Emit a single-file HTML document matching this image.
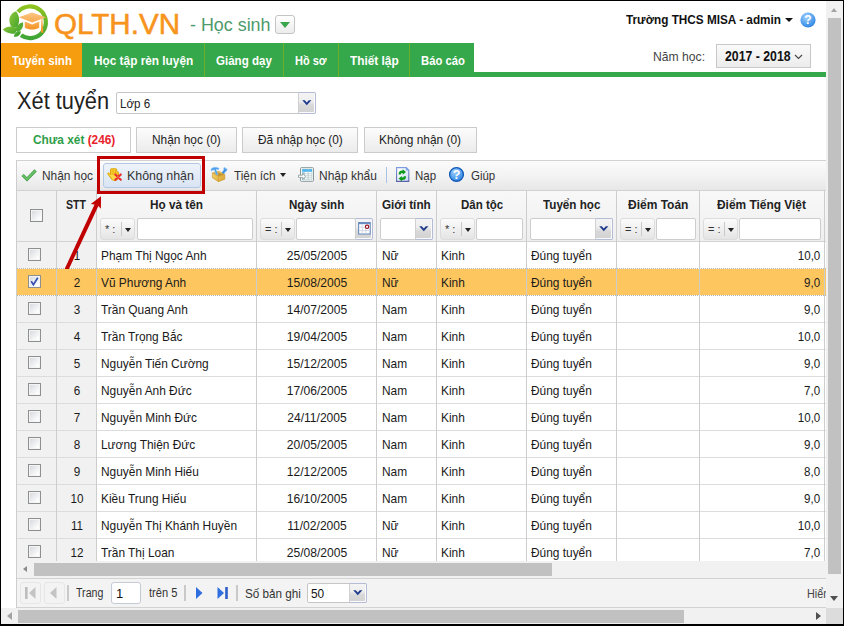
<!DOCTYPE html>
<html lang="vi">
<head>
<meta charset="utf-8">
<title>QLTH.VN - Xét tuyển</title>
<style>
html,body{margin:0;padding:0;}
body{width:844px;height:626px;overflow:hidden;background:#fff;font-family:"Liberation Sans",sans-serif;font-size:13px;color:#1a1a1a;position:relative;}
#page{position:absolute;left:0;top:0;width:844px;height:626px;background:#fff;overflow:hidden;}
.a{position:absolute;}
.t{position:absolute;white-space:nowrap;line-height:16px;height:16px;transform-origin:0 0;}
svg{position:absolute;overflow:visible;}
/* nav */
.nav{position:absolute;top:43px;height:34px;background:#35a84b;}
.nav i{position:absolute;left:0;top:0;width:1px;height:34px;background:#6fae2a;}
.nv{color:#fff;font-weight:bold;font-size:13px;top:53px;}
#navline{position:absolute;left:82px;top:72px;width:744px;height:5px;background:#35a84b;}
/* tabs */
.tab{position:absolute;top:127px;height:26px;box-sizing:border-box;border:1px solid #cbcbcb;background:linear-gradient(#fcfcfc,#ebebeb);}
.tb{top:132px;font-size:13px;color:#222;}
/* grid */
#gtb{position:absolute;left:16px;top:160px;width:810px;height:31px;box-sizing:border-box;border:1px solid #d2d2d2;border-right:0;background:linear-gradient(#fbfbfb 0%,#f3f3f3 50%,#e7e7e7 100%);}
#ghd{position:absolute;left:16px;top:191px;width:810px;height:51px;box-sizing:border-box;border:1px solid #d2d2d2;border-top:0;border-right:0;background:linear-gradient(#f8f8f8,#efefef);}
.vl{position:absolute;width:1px;background:#cdcdcd;top:191px;height:370px;z-index:3;}
.tt{top:167px;font-size:13px;color:#333;}
.th{top:197px;font-weight:bold;font-size:13px;color:#222;}
.row{position:absolute;left:17px;width:809px;height:26px;border-bottom:1px solid #dcdcdc;}
.row:before{content:"";position:absolute;left:0;top:0;width:79px;height:26px;background:#f1f1f1;}
.row.sel{background:#fec65f;border-bottom:1px solid transparent;background-clip:padding-box;}
.row.sel:before{background:repeating-linear-gradient(90deg,#b4b4b4 0 1px,#fbfbfb 1px 2px);left:0;top:26px;width:809px;height:1px;}
.row.sel:after{content:"";position:absolute;left:0;top:-1px;width:809px;height:1px;background:repeating-linear-gradient(90deg,#b4b4b4 0 1px,#fbfbfb 1px 2px);}
.c{position:absolute;top:6px;transform:scaleX(.915);transform-origin:0 0;font-size:13px;white-space:nowrap;line-height:16px;color:#1a1a1a;}
.cb{position:absolute;left:11px;top:6px;width:11px;height:11px;border:1px solid #8e8f8f;background:linear-gradient(135deg,#d9dbe0 10%,#fdfdfd 80%);box-shadow:inset 0 0 0 1px #f4f4f4;}
.cb svg{left:0;top:0;}
.stt{left:40px;width:40px;text-align:center;transform-origin:50% 0;transform:scaleX(.9);}
.nm{left:84px;}
.dob{left:240px;width:120px;text-align:center;transform-origin:50% 0;transform:scaleX(.93);}
.sex{left:365px;}
.dt{left:424px;}
.th2{left:514px;}
.sc{right:6px;transform-origin:100% 0;transform:scaleX(.89);}
.fbtn{position:absolute;top:218px;height:22px;box-sizing:border-box;border:1px solid #dcdcdc;border-radius:3px;background:linear-gradient(#fbfbfb,#e4e4e4);}
.fbtn b{position:absolute;left:4px;top:3px;font-weight:normal;font-size:11px;line-height:14px;color:#333;white-space:nowrap;}
.fbtn i{position:absolute;right:12px;top:3px;width:1px;height:14px;background:#c9c9c9;}
.fbtn u{position:absolute;right:3px;top:9px;width:0;height:0;border:3px solid transparent;border-top:4px solid #222;border-bottom:0;}
.fin{position:absolute;top:218px;height:22px;box-sizing:border-box;border:1px solid #cdcdcd;border-radius:2px;background:#fff;}
.dd{position:absolute;right:-1px;top:-1px;width:18px;height:22px;box-sizing:border-box;border:1px solid #b4bcd6;border-left-color:#d0d0d0;border-radius:0 2px 2px 0;background:linear-gradient(#f4f4f4 0%,#eeeeee 40%,#d9d9d9 60%,#d2d2d2 100%);box-shadow:inset -1px -1px 0 #fbfbfb;}
.dd svg{left:3px;top:7px;}
/* pager */
#pg{position:absolute;left:16px;top:578px;width:810px;height:30px;box-sizing:border-box;border:1px solid #d2d2d2;border-right:0;background:#f3f3f3;}
.pt{font-size:12px;color:#333;top:586px;}
.sep{position:absolute;width:2px;height:16px;top:585px;background:#c9c9c9;margin-left:-1px;}
/* scrollbars */
.sbt{background:#f1f1f1;position:absolute;}
.sbh{background:#c1c1c1;position:absolute;}

</style>
</head>
<body>
<div id="page">

<!-- ===== header ===== -->
<svg id="logo" style="left:0;top:0" width="56" height="42" viewBox="0 0 56 42">
  <defs>
    <linearGradient id="lg1" x1="0" y1="0" x2="0" y2="1"><stop offset="0" stop-color="#8fc31f"/><stop offset="1" stop-color="#3ea535"/></linearGradient>
    <linearGradient id="lg2" x1="0" y1="0" x2="0" y2="1"><stop offset="0" stop-color="#fcc684"/><stop offset="1" stop-color="#f8a94e"/></linearGradient>
    <linearGradient id="lg3" x1="0" y1="0" x2="0" y2="1"><stop offset="0" stop-color="#f9b35e"/><stop offset="1" stop-color="#f3921f"/></linearGradient>
    <linearGradient id="lg4" x1="0" y1="0" x2="1" y2="1"><stop offset="0" stop-color="#8fc73a"/><stop offset="1" stop-color="#44a52c"/></linearGradient>
  </defs>
  <path d="M17.6 11.2 A15.85 15.85 0 1 1 20.6 34.6" fill="none" stroke="url(#lg1)" stroke-width="4.2" transform="translate(0.4,0.7)"/>
  <path d="M16.1 11.2 C10 13.5 7.6 19.4 10.8 26 C12.6 27.8 15.4 28 17.2 27 C20 21.6 19.8 16.4 16.1 11.2 Z" fill="url(#lg4)"/>
  <path d="M2.8 29.6 C6.4 25.8 12 25.6 16.4 27.8 C17 29.8 16.4 32 15 33.4 C10.6 34.2 5.8 33.2 2.8 29.6 Z" fill="url(#lg4)"/>
  <path d="M15.6 30.6 C15.8 26.4 18.8 23 23 22.2 C23.8 26.6 21.8 30.6 17.4 32 Z" fill="#58ad34"/>
  <path d="M13.8 36.8 C14.4 33 17 30.8 20.8 31.2 C20.8 34.8 18 37.2 13.8 36.8 Z" fill="#45a52d"/>
  <path d="M18.8 17.3 L31.9 12.4 L45.9 17.3 L32.2 22.6 Z" fill="url(#lg2)"/>
  <path d="M24.8 21.6 L32.2 24.4 L39.2 21.6 L39.2 27.4 C35.4 30.2 29 30.2 24.8 27.4 Z" fill="url(#lg3)"/>
  <path d="M41.4 18.8 L42.4 18.6 L43.4 33 L40.9 32.2 Z" fill="url(#lg3)"/>
</svg>
<span class="t" id="brand" style="left:54px;top:8px;font-size:29px;line-height:32px;height:32px;color:#f7941d;-webkit-text-stroke:0.55px #f7941d;transform:scaleX(1.02)">QLTH.VN</span>
<span class="t" id="role" style="left:190px;top:14px;font-size:18px;line-height:22px;height:22px;color:#4d9a6c;transform:scaleX(0.9936)">- Học sinh</span>
<div class="a" style="left:275px;top:15px;width:20px;height:19px;box-sizing:border-box;border:1px solid #c4c4c4;border-radius:3px;background:linear-gradient(#fff,#ececec);"><span class="a" style="left:4px;top:6px;width:0;height:0;border:5px solid transparent;border-top:6px solid #3aa64c;border-bottom:0;"></span></div>

<span class="t" id="school" style="left:625.5px;top:12px;font-size:13px;font-weight:bold;color:#111;transform:scaleX(0.905)">Trường THCS MISA - admin</span>
<span class="a" style="left:785px;top:18px;width:0;height:0;border:4px solid transparent;border-top:4px solid #111;border-bottom:0;"></span>
<svg style="left:800px;top:12px" width="16" height="16" viewBox="0 0 16 16">
  <defs><radialGradient id="hg" cx="0.4" cy="0.3" r="0.8"><stop offset="0" stop-color="#a4d2fd"/><stop offset="0.65" stop-color="#4a9aec"/><stop offset="1" stop-color="#2b7ad8"/></radialGradient></defs>
  <circle cx="8" cy="8" r="7.6" fill="url(#hg)"/>
  <text x="8" y="12.2" text-anchor="middle" font-family="Liberation Sans,sans-serif" font-weight="bold" font-size="12" fill="#fff">?</text>
</svg>
<span class="t" id="namhoc" style="left:653.1px;top:49px;font-size:13px;color:#444;transform:scaleX(0.9349)">Năm học:</span>
<div class="a" style="left:716px;top:44px;width:95px;height:24px;box-sizing:border-box;border:1px solid #c8c8c8;background:linear-gradient(#fafafa,#ececec);"></div>
<span class="t" id="year" style="left:725.2px;top:48px;font-size:14px;font-weight:bold;color:#111;transform:scaleX(0.8773)">2017 - 2018</span>
<svg style="left:794px;top:54px" width="9" height="6" viewBox="0 0 9 6"><path d="M1 1 L4.5 4.5 L8 1" fill="none" stroke="#444" stroke-width="1.1"/></svg>

<!-- ===== nav ===== -->
<div id="navline"></div>
<div class="nav" style="left:1px;width:81px;background:#f59c0f;"></div>
<div class="nav" style="left:82px;width:122px;"></div>
<div class="nav" style="left:204px;width:79px;"><i></i></div>
<div class="nav" style="left:283px;width:55px;"><i></i></div>
<div class="nav" style="left:338px;width:71px;"><i></i></div>
<div class="nav" style="left:409px;width:65px;"><i></i></div>
<span class="t nv" id="n1" style="left:12px;top:53px;transform:scaleX(0.8861)">Tuyển sinh</span>
<span class="t nv" id="n2" style="left:93.8px;top:53px;transform:scaleX(0.9094)">Học tập rèn luyện</span>
<span class="t nv" id="n3" style="left:215.5px;top:53px;transform:scaleX(0.8881)">Giảng dạy</span>
<span class="t nv" id="n4" style="left:294.5px;top:53px;transform:scaleX(0.8449)">Hồ sơ</span>
<span class="t nv" id="n5" style="left:349.5px;top:53px;transform:scaleX(0.9111)">Thiết lập</span>
<span class="t nv" id="n6" style="left:420.5px;top:53px;transform:scaleX(0.869)">Báo cáo</span>

<!-- ===== title ===== -->
<span class="t" id="title" style="left:16.5px;top:88px;font-size:23.5px;line-height:26px;height:26px;color:#222;transform:scaleX(0.9265)">Xét tuyển</span>
<div class="a" style="left:116px;top:92px;width:200px;height:22px;box-sizing:border-box;border:1px solid #c6c6c6;border-radius:2px;background:#fff;">
  <div class="dd"><svg width="10" height="6" viewBox="0 0 10 6"><path d="M0.2 0.2 L2.8 0.2 L4.8 2.5 L6.8 0.2 L9.4 0.2 L4.8 5.3 Z" fill="#1f3a8c"/></svg></div>
</div>
<span class="t" id="lop" style="left:120px;top:96px;font-size:12px;color:#222;transform:scaleX(0.9667)">Lớp 6</span>

<!-- ===== tabs ===== -->
<div class="tab" style="left:16px;width:115px;background:#fff;"></div>
<div class="tab" style="left:136px;width:101px;"></div>
<div class="tab" style="left:242px;width:116px;"></div>
<div class="tab" style="left:364px;width:113px;"></div>
<span class="t tb" id="t1" style="left:32.5px;top:132px;font-weight:bold;color:#2e9e48;transform:scaleX(0.9111)">Chưa xét <span style="color:#e8222b">(246)</span></span>
<span class="t tb" id="t2" style="left:152.3px;top:132px;transform:scaleX(0.9144)">Nhận học (0)</span>
<span class="t tb" id="t3" style="left:258px;top:132px;transform:scaleX(0.9097)">Đã nhập học (0)</span>
<span class="t tb" id="t4" style="left:379.1px;top:132px;transform:scaleX(0.9146)">Không nhận (0)</span>

<!-- ===== grid toolbar ===== -->
<div id="gtb"></div>
<div id="ghd"></div>
<div class="a" style="left:17px;top:191px;width:79px;height:50px;background:#f1f1f1;"></div>
<div class="a" style="left:103px;top:163px;width:98px;height:25px;box-sizing:border-box;border:1px solid #b3c8e4;border-radius:3px;background:linear-gradient(#eef3fa,#d9e4f3);"></div>
<svg style="left:21px;top:168px" width="16" height="14" viewBox="0 0 16 14"><path d="M1.6 7 L6 11.4 L14.6 2.4" fill="none" stroke="#3f9a3f" stroke-width="3.1" stroke-linejoin="miter"/><path d="M1.8 7 L6 11.2 L14.4 2.5" fill="none" stroke="#6cc36c" stroke-width="1.7" stroke-linejoin="miter"/></svg>
<span class="t tt" id="b1" style="left:41.6px;top:168px;transform:scaleX(0.9157)">Nhận học</span>
<svg style="left:106px;top:167px" width="17" height="15" viewBox="0 0 17 15">
<g transform="translate(1.1,0.9) scale(0.89)">
  <path d="M3.9 1.8 Q3.9 1 4.7 1 L9.9 1 Q10.8 1 10.8 2 L10.8 4.4 L12.2 4.4 Q12.9 4.4 12.9 5.2 L12.9 10 Q12.9 14 9.4 14 L7.2 14 Q6 14 5.2 12.8 L1.1 7.2 Q0.5 6.2 1.3 5.7 Q2.1 5.3 2.8 6.1 L3.9 7.4 Z" fill="#ffd84a" stroke="#d9a300" stroke-width="1.1"/>
  <path d="M5.7 1.6 V8.2 M7.5 1.6 V8.2 M9.3 1.6 V8.2 M11.3 5 V8.6" stroke="#e0a800" stroke-width="0.9" fill="none"/>
  <path d="M2 7 L5.8 12.2" stroke="#e8b418" stroke-width="0.8" stroke-dasharray="1 1" fill="none"/>
  <path d="M9.2 7.4 L15.4 13.4 M15.4 7.4 L9.2 13.4" stroke="#e8312c" stroke-width="2.4" stroke-linecap="round" fill="none"/>
  <circle cx="12.3" cy="10.4" r="1.6" fill="#f2504a"/>
</g>
</svg>
<span class="t tt" id="b2" style="left:127px;top:168px;transform:scaleX(0.9544)">Không nhận</span>
<svg style="left:210px;top:166px" width="18" height="17" viewBox="0 0 18 17">
  <defs><linearGradient id="tbx" x1="0" y1="0" x2="1" y2="1"><stop offset="0" stop-color="#f6d873"/><stop offset="1" stop-color="#d9a02c"/></linearGradient></defs>
  <path d="M11.2 7.4 L14 3.6 L13.6 2 L15 1.4 L15.6 3 L16.8 2.6 L17 4.4 L15.6 5.6 L13.4 8.8 Z" fill="#3f92e4" stroke="#8cc4f4" stroke-width="0.5"/>
  <path d="M2.4 6.9 L8.4 5.2 L14.8 8.7 L14.8 13.2 L8.4 15.7 L2.4 11.7 Z" fill="url(#tbx)" stroke="#c9962a" stroke-width="0.6"/>
  <path d="M3.4 7.2 L8.4 5.9 L13.6 8.7 L8.6 10.3 Z" fill="#a87a20" opacity="0.6"/>
  <path d="M2.4 6.9 L8.5 10.6 L14.8 8.7 M8.5 10.6 V15.7" fill="none" stroke="#cf9c30" stroke-width="0.6"/>
  <path d="M0.8 3.8 Q1.4 1.5 4.6 1.2 Q7.8 1 9.2 2.6 L8.4 3.7 Q6.8 2.9 6 3.4 L8 8.4 L6.2 9 L4.4 4 Q2.4 3.6 1.4 5.2 Z" fill="#4a9eea" stroke="#9ccdf6" stroke-width="0.5"/>
  <path d="M8.2 6.2 Q10.2 5.4 11.4 7.4" fill="none" stroke="#e9bd4e" stroke-width="1.2"/>
</svg>
<span class="t tt" id="b3" style="left:233.8px;top:168px;transform:scaleX(0.906)">Tiện ích</span>
<span class="a" style="left:280px;top:173px;width:0;height:0;border:3px solid transparent;border-top:4px solid #222;border-bottom:0;"></span>
<svg style="left:298px;top:166px" width="17" height="17" viewBox="0 0 17 17">
  <rect x="2.5" y="1.7" width="13" height="13.6" rx="0.8" fill="#fff" stroke="#869797" stroke-width="1"/>
  <rect x="4.2" y="3.2" width="9.8" height="10.6" fill="#fff" stroke="#a9c2c4" stroke-width="0.6"/>
  <rect x="4.2" y="3.2" width="9.8" height="2.6" fill="#45b4f0"/>
  <rect x="4.2" y="5.8" width="2.2" height="8" fill="#8fd0f5" opacity="0.8"/>
  <path d="M4.2 7.8 H14 M4.2 9.8 H14 M4.2 11.8 H14 M6.4 5.8 V13.8 M10.2 3.4 V13.8" stroke="#a9c2c4" stroke-width="0.7"/>
  <path d="M0.5 9.2 H4.6 V7.4 L7.6 10.3 L4.6 13.2 V11.4 H0.5 Z" fill="#fff" stroke="#8a9a9a" stroke-width="0.8" stroke-linejoin="round"/>
</svg>
<span class="t tt" id="b4" style="left:318.6px;top:168px;transform:scaleX(0.9205)">Nhập khẩu</span>
<div class="a" style="left:386px;top:167px;width:1px;height:16px;background:#a9c3e6;"></div>
<svg style="left:396px;top:166px" width="14" height="17" viewBox="0 0 14 17">
  <defs><linearGradient id="dcg" x1="0" y1="0" x2="1" y2="1"><stop offset="0.2" stop-color="#ffffff"/><stop offset="1" stop-color="#c4d8f6"/></linearGradient>
  <linearGradient id="dcs" x1="0" y1="0" x2="0" y2="1"><stop offset="0" stop-color="#7f9ae0"/><stop offset="1" stop-color="#5a62a8"/></linearGradient></defs>
  <path d="M0.6 1.6 H10.2 L12.8 4.2 V15.4 H0.6 Z" fill="url(#dcg)" stroke="url(#dcs)" stroke-width="1.1"/>
  <path d="M10.2 1.6 V4.2 H12.8 Z" fill="#6ea8ee" stroke="#7f9ae0" stroke-width="0.5"/>
  <g transform="translate(6.3,9.3) scale(1.2) translate(-6.3,-9.3)"><path d="M3.2 8.6 Q3.2 5.2 6.6 5.4 L6.6 4.2 L9.4 6.6 L6.6 8.8 L6.6 7.4 Q5 7.4 5 8.6 Z" fill="#0c9a1c"/>
  <path d="M9.4 10 Q9.4 13.4 6 13.2 L6 14.4 L3.2 12 L6 9.8 L6 11.2 Q7.6 11.2 7.6 10 Z" fill="#0c9a1c"/></g>
</svg>
<span class="t tt" id="b5" style="left:414.6px;top:168px;transform:scaleX(0.8842)">Nạp</span>
<svg style="left:448px;top:166px" width="17" height="17" viewBox="0 0 17 17">
  <circle cx="8.5" cy="8.5" r="6.9" fill="url(#hg)" stroke="#0f57b5" stroke-width="1.3"/>
  <text x="8.5" y="13" text-anchor="middle" font-family="Liberation Sans,sans-serif" font-weight="bold" font-size="12.5" fill="#fff">?</text>
</svg>
<span class="t tt" id="b6" style="left:470.5px;top:168px;transform:scaleX(0.8814)">Giúp</span>

<!-- ===== grid header ===== -->
<div class="vl" style="left:56px"></div>
<div class="vl" style="left:96px"></div>
<div class="vl" style="left:256px"></div>
<div class="vl" style="left:376px"></div>
<div class="vl" style="left:436px"></div>
<div class="vl" style="left:526px"></div>
<div class="vl" style="left:616px"></div>
<div class="vl" style="left:699px"></div>
<div class="vl" style="left:824px"></div>
<div class="vl" style="left:16px;top:160px;height:448px;"></div>
<span class="cb" style="left:30px;top:209px;"></span>
<span class="t th" id="h1" style="left:66.2px;top:197px;transform:scaleX(0.8126)">STT</span>
<span class="t th" id="h2" style="left:150px;top:197px;transform:scaleX(0.9049)">Họ và tên</span>
<span class="t th" id="h3" style="left:289px;top:197px;transform:scaleX(0.8885)">Ngày sinh</span>
<span class="t th" id="h4" style="left:382px;top:197px;transform:scaleX(0.9016)">Giới tính</span>
<span class="t th" id="h5" style="left:460.5px;top:197px;transform:scaleX(0.8853)">Dân tộc</span>
<span class="t th" id="h6" style="left:543.2px;top:197px;transform:scaleX(0.8972)">Tuyển học</span>
<span class="t th" id="h7" style="left:627.5px;top:197px;transform:scaleX(0.923)">Điểm Toán</span>
<span class="t th" id="h8" style="left:717.2px;top:197px;transform:scaleX(0.9159)">Điểm Tiếng Việt</span>

<div class="fbtn" style="left:100px;width:35px"><b>* :</b><i></i><u></u></div>
<div class="fin" style="left:137px;width:116px"></div>
<div class="fbtn" style="left:260px;width:35px"><b>= :</b><i></i><u></u></div>
<div class="fin" style="left:296px;width:60px"></div>
<div class="dd" style="left:355px;top:218px;right:auto;"><svg style="left:2px;top:3px" width="13" height="13" viewBox="0 0 13 13"><rect x="0.6" y="0.6" width="11.6" height="11.4" fill="#fff" stroke="#6a8cc0" stroke-width="1.1"/><rect x="0.6" y="0.3" width="11.6" height="1.9" fill="#6a8cc0"/><path d="M1.2 5.2 H11.6 M1.2 8.4 H11.6 M4.2 2.4 V11.6 M7.8 2.4 V11.6" stroke="#cfd6e2" stroke-width="0.9"/><circle cx="9.1" cy="4.8" r="1.7" fill="#fff" stroke="#9c0f1a" stroke-width="1.1"/></svg></div>
<div class="fin" style="left:380px;width:53px"><div class="dd"><svg width="10" height="6" viewBox="0 0 10 6"><path d="M0.2 0.2 L2.8 0.2 L4.8 2.5 L6.8 0.2 L9.4 0.2 L4.8 5.3 Z" fill="#1f3a8c"/></svg></div></div>
<div class="fbtn" style="left:440px;width:35px"><b>* :</b><i></i><u></u></div>
<div class="fin" style="left:476px;width:47px"></div>
<div class="fin" style="left:530px;width:83px"><div class="dd"><svg width="10" height="6" viewBox="0 0 10 6"><path d="M0.2 0.2 L2.8 0.2 L4.8 2.5 L6.8 0.2 L9.4 0.2 L4.8 5.3 Z" fill="#1f3a8c"/></svg></div></div>
<div class="fbtn" style="left:620px;width:35px"><b>= :</b><i></i><u></u></div>
<div class="fin" style="left:656px;width:40px"></div>
<div class="fbtn" style="left:703px;width:35px"><b>= :</b><i></i><u></u></div>
<div class="fin" style="left:739px;width:82px"></div>

<!-- data rows -->
<div id="rows">
<div class="row" style="top:242px">
<span class="cb"></span>
<span class="c stt">1</span><span class="c nm">Phạm Thị Ngọc Anh</span><span class="c dob">25/05/2005</span><span class="c sex">Nữ</span><span class="c dt">Kinh</span><span class="c th2">Đúng tuyển</span><span class="c sc">10,0</span>
</div>
<div class="row sel" style="top:269px">
<span class="cb on"><svg width="11" height="11" viewBox="0 0 11 11"><path d="M2.2 5.2 L4.4 8.6 L8.8 1.8" fill="none" stroke="#3350b0" stroke-width="1.7"/></svg></span>
<span class="c stt">2</span><span class="c nm">Vũ Phương Anh</span><span class="c dob">15/08/2005</span><span class="c sex">Nữ</span><span class="c dt">Kinh</span><span class="c th2">Đúng tuyển</span><span class="c sc">9,0</span>
</div>
<div class="row" style="top:296px">
<span class="cb"></span>
<span class="c stt">3</span><span class="c nm">Trần Quang Anh</span><span class="c dob">14/07/2005</span><span class="c sex">Nam</span><span class="c dt">Kinh</span><span class="c th2">Đúng tuyển</span><span class="c sc">9,0</span>
</div>
<div class="row" style="top:323px">
<span class="cb"></span>
<span class="c stt">4</span><span class="c nm">Trần Trọng Bắc</span><span class="c dob">19/04/2005</span><span class="c sex">Nam</span><span class="c dt">Kinh</span><span class="c th2">Đúng tuyển</span><span class="c sc">10,0</span>
</div>
<div class="row" style="top:350px">
<span class="cb"></span>
<span class="c stt">5</span><span class="c nm">Nguyễn Tiến Cường</span><span class="c dob">15/12/2005</span><span class="c sex">Nam</span><span class="c dt">Kinh</span><span class="c th2">Đúng tuyển</span><span class="c sc">9,0</span>
</div>
<div class="row" style="top:377px">
<span class="cb"></span>
<span class="c stt">6</span><span class="c nm">Nguyễn Anh Đức</span><span class="c dob">17/06/2005</span><span class="c sex">Nam</span><span class="c dt">Kinh</span><span class="c th2">Đúng tuyển</span><span class="c sc">7,0</span>
</div>
<div class="row" style="top:404px">
<span class="cb"></span>
<span class="c stt">7</span><span class="c nm">Nguyễn Minh Đức</span><span class="c dob">24/11/2005</span><span class="c sex">Nam</span><span class="c dt">Kinh</span><span class="c th2">Đúng tuyển</span><span class="c sc">10,0</span>
</div>
<div class="row" style="top:431px">
<span class="cb"></span>
<span class="c stt">8</span><span class="c nm">Lương Thiện Đức</span><span class="c dob">20/05/2005</span><span class="c sex">Nam</span><span class="c dt">Kinh</span><span class="c th2">Đúng tuyển</span><span class="c sc">9,0</span>
</div>
<div class="row" style="top:458px">
<span class="cb"></span>
<span class="c stt">9</span><span class="c nm">Nguyễn Minh Hiếu</span><span class="c dob">12/12/2005</span><span class="c sex">Nam</span><span class="c dt">Kinh</span><span class="c th2">Đúng tuyển</span><span class="c sc">8,0</span>
</div>
<div class="row" style="top:485px">
<span class="cb"></span>
<span class="c stt">10</span><span class="c nm">Kiều Trung Hiếu</span><span class="c dob">16/10/2005</span><span class="c sex">Nam</span><span class="c dt">Kinh</span><span class="c th2">Đúng tuyển</span><span class="c sc">9,0</span>
</div>
<div class="row" style="top:512px">
<span class="cb"></span>
<span class="c stt">11</span><span class="c nm">Nguyễn Thị Khánh Huyền</span><span class="c dob">11/02/2005</span><span class="c sex">Nữ</span><span class="c dt">Kinh</span><span class="c th2">Đúng tuyển</span><span class="c sc">10,0</span>
</div>
<div class="row" style="top:539px">
<span class="cb"></span>
<span class="c stt">12</span><span class="c nm">Trần Thị Loan</span><span class="c dob">25/08/2005</span><span class="c sex">Nữ</span><span class="c dt">Kinh</span><span class="c th2">Đúng tuyển</span><span class="c sc">7,0</span>
</div>
</div>

<!-- ===== inner horizontal scrollbar ===== -->
<div class="sbt" style="left:17px;top:561px;width:809px;height:17px;"></div>
<div class="sbh" style="left:34px;top:563px;width:518px;height:13px;"></div>
<span class="a" style="left:23px;top:566px;width:0;height:0;border:3.5px solid transparent;border-right:4px solid #8a8a8a;border-left:0;"></span>

<!-- ===== pager ===== -->
<div id="pg"></div>
<div class="a" style="left:20px;top:582px;width:21px;height:22px;box-sizing:border-box;border:1px solid #e6e6e6;border-radius:3px;"></div>
<div class="a" style="left:44px;top:582px;width:21px;height:22px;box-sizing:border-box;border:1px solid #e6e6e6;border-radius:3px;"></div>
<svg style="left:25px;top:587px" width="11" height="12" viewBox="0 0 11 12"><rect x="0" y="0" width="2.6" height="12" fill="#bdbdbd"/><path d="M10.5 0 V12 L4 6 Z" fill="#c4c4c4"/></svg>
<svg style="left:50px;top:587px" width="7" height="12" viewBox="0 0 7 12"><path d="M6.5 0 V12 L0 6 Z" fill="#c4c4c4"/></svg>
<div class="sep" style="left:68px"></div>
<span class="t pt" id="p1" style="left:75.8px;top:585px;transform:scaleX(0.8849)">Trang</span>
<div class="a" style="left:111px;top:582px;width:30px;height:22px;box-sizing:border-box;border:1px solid #c6c9d6;border-radius:3px;background:#fff;"></div>
<span class="t pt" id="p2" style="left:116px;color:#111;font-size:13px;">1</span>
<span class="t pt" id="p3" style="left:149.2px;top:585px;transform:scaleX(0.9271)">trên 5</span>
<div class="sep" style="left:185px"></div>
<svg style="left:196px;top:587px" width="7" height="12" viewBox="0 0 7 12"><path d="M0 0 V12 L6.5 6 Z" fill="#2f6fe0"/></svg>
<svg style="left:217px;top:587px" width="11" height="12" viewBox="0 0 11 12"><rect x="8.2" y="0" width="2.6" height="12" fill="#2c5fc8"/><path d="M0.5 0 V12 L7 6 Z" fill="#2f6fe0"/></svg>
<div class="sep" style="left:237px"></div>
<span class="t pt" id="p4" style="left:244.5px;top:586px;font-size:13px;transform:scaleX(0.8992)">Số bản ghi</span>
<div class="a" style="left:307px;top:583px;width:60px;height:20px;box-sizing:border-box;border:1px solid #c6c6c6;border-radius:2px;background:#fff;">
  <div class="dd" style="height:20px"><svg style="top:6px" width="10" height="6" viewBox="0 0 10 6"><path d="M0.2 0.2 L2.8 0.2 L4.8 2.5 L6.8 0.2 L9.4 0.2 L4.8 5.3 Z" fill="#1f3a8c"/></svg></div>
</div>
<span class="t pt" id="p5" style="left:311.2px;top:586px;font-size:13px;color:#111;transform:scaleX(0.9136)">50</span>
<span class="t pt" id="p6" style="left:807px;color:#444;transform:scaleX(.9);">Hiển</span>

<!-- ===== annotation: red box + arrow ===== -->
<div class="a" style="left:97px;top:156px;width:108px;height:38px;box-sizing:border-box;border:3px solid #c00000;z-index:5;"></div>
<svg style="left:0;top:0;z-index:5;" width="844" height="626" viewBox="0 0 844 626">
  <path d="M64.6 269 L68.9 269 L98.6 205.6 L94.9 203.8 Z" fill="#c00000"/>
  <path d="M101 196.3 L100.9 208.8 L97.4 205 L90.8 203.9 Z" fill="#c00000"/>
</svg>

<!-- ===== page scrollbars ===== -->
<div class="sbt" style="left:826px;top:1px;width:17px;height:607px;"></div>
<div class="sbh" style="left:828px;top:18px;width:13px;height:556px;"></div>
<span class="a" style="left:831px;top:8px;width:0;height:0;border:3.5px solid transparent;border-bottom:4px solid #a3a3a3;border-top:0;"></span>
<span class="a" style="left:830px;top:596px;width:0;height:0;border:4px solid transparent;border-top:5px solid #505050;border-bottom:0;"></span>
<div class="sbt" style="left:1px;top:608px;width:825px;height:16px;"></div>
<div class="sbh" style="left:18px;top:610px;width:666px;height:13px;"></div>
<span class="a" style="left:7px;top:612px;width:0;height:0;border:4px solid transparent;border-right:5px solid #a3a3a3;border-left:0;"></span>
<span class="a" style="left:816px;top:612px;width:0;height:0;border:4px solid transparent;border-left:5px solid #505050;border-right:0;"></span>
<div class="a" style="left:826px;top:608px;width:17px;height:16px;background:#dcdcdc;"></div>

<!-- ===== black frame ===== -->
<div class="a" style="left:0;top:0;width:844px;height:1px;background:#000;"></div>
<div class="a" style="left:0;top:0;width:1px;height:626px;background:#000;"></div>
<div class="a" style="left:843px;top:0;width:1px;height:626px;background:#000;"></div>
<div class="a" style="left:0;top:624px;width:844px;height:2px;background:#000;"></div>

</div>
</body>
</html>
